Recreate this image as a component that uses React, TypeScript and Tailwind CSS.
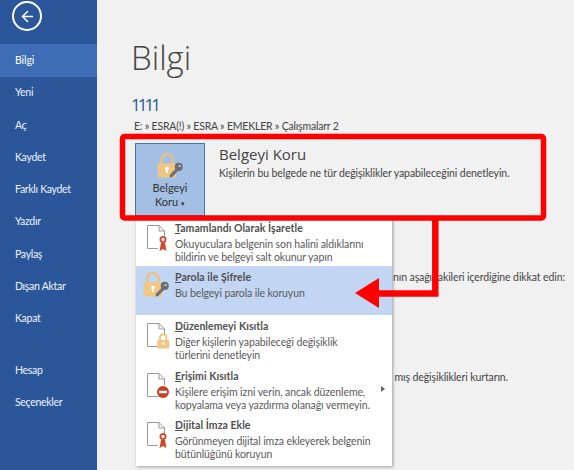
import { ArrowLeft } from "lucide-react";

const font = { fontFamily: 'Lato, "Open Sans", sans-serif' };
const headFont = { fontFamily: '"Open Sans", "Noto Sans", sans-serif' };

const navTop = ["Yeni", "Aç", "Kaydet", "Farklı Kaydet", "Yazdır", "Paylaş", "Dışarı Aktar", "Kapat"];
const navBottom = ["Hesap", "Seçenekler"];

function LockKey({ className }: { className?: string }) {
  return (
    <svg viewBox="0 0 32 32" className={className}>
      <path d="M6 13V9a6.5 6.5 0 0 1 13 0v4" fill="none" stroke="#eec07c" strokeWidth="2.6" />
      <rect x="2" y="13" width="21" height="16" rx="1" fill="#efc684" />
      <circle cx="12.5" cy="19" r="2.2" fill="#fff" />
      <rect x="11.5" y="19" width="2" height="5" fill="#fff" />
      <g fill="#6d6e71">
        <circle cx="26" cy="17" r="4.6" />
        <path d="M23.4 18.4l2.4 2.4-7 7.6-1.4.6-1.6-.2-.2-1.8.6-1.4z" />
      </g>
      <circle cx="27" cy="16" r="1.2" fill="#d9d9d9" />
    </svg>
  );
}

function DocIcon({ badge }: { badge: "ribbon" | "lock" | "stop" }) {
  return (
    <svg viewBox="0 0 28 28" className="w-[28px] h-[28px]">
      <path d="M16 24.5H5.5V1.5H17L22.5 7V13M17 1.5V7H22.5" fill="none" stroke="#999" strokeWidth="1" />
      {badge === "ribbon" && (
        <g>
          <circle cx="21" cy="15.5" r="2.6" fill="none" stroke="#d24726" strokeWidth="1.8" />
          <path d="M17.5 27l1.5-8h4l1.5 8-3.5-2z" fill="#d24726" />
        </g>
      )}
      {badge === "lock" && (
        <g>
          <path d="M18 18v-2.5a3.2 3.2 0 0 1 6.4 0V18" fill="none" stroke="#eec07c" strokeWidth="1.7" />
          <rect x="15.2" y="18" width="12" height="8.5" rx="1" fill="#efc684" />
          <circle cx="21.2" cy="21.5" r="1.2" fill="#fff" />
        </g>
      )}
      {badge === "stop" && (
        <g>
          <circle cx="21" cy="20" r="6" fill="#c8402a" />
          <rect x="17" y="18.8" width="8" height="2.4" fill="#fff" />
        </g>
      )}
    </svg>
  );
}

function MenuItem({
  title,
  hot,
  lines,
  icon,
  active,
  arrow,
  height,
}: {
  title: string;
  hot: string;
  lines: string[];
  icon: React.ReactNode;
  active?: boolean;
  arrow?: boolean;
  height: string;
}) {
  return (
    <div className={`flex relative pl-[6px] ${height} ${active ? "bg-[#c2d5f2]" : ""}`}>
      <div className="w-[32px] shrink-0 pt-[3px]">{icon}</div>
      <div className="pl-[1px]">
        <div className="text-[10.5px] leading-[14px] font-bold tracking-[0.05px] text-[#505050] whitespace-nowrap">
          <span className="underline">{hot}</span>
          {title}
        </div>
        <div className="mt-[3px]">
          {lines.map((l) => (
            <div key={l} className="text-[10.5px] leading-[13px] tracking-[-0.1px] text-[#5a5a5a] whitespace-nowrap">
              {l}
            </div>
          ))}
        </div>
      </div>
      {arrow && (
        <span className="absolute right-[7px] top-[21px] w-0 h-0 border-y-[3px] border-y-transparent border-l-[4px] border-l-[#666]" />
      )}
    </div>
  );
}

export default function App() {
  return (
    <div className="relative flex w-[574px] h-[470px] overflow-hidden bg-[#f1f1f1]" style={font}>
      <aside className="w-[97px] shrink-0 bg-[#2b579a] text-white">
        <div className="h-[44px] pl-[12px] pt-[1px]">
          <div className="w-[30px] h-[30px] rounded-full border-2 border-white flex items-center justify-center">
            <ArrowLeft className="w-[17px] h-[17px]" strokeWidth={2.2} />
          </div>
        </div>
        <div className="h-[33px] bg-[#3e6db5] pl-[15px] pt-[1px] flex items-center text-[10.5px] tracking-[-0.1px]">Bilgi</div>
        {navTop.map((n) => (
          <div key={n} className="h-[32.3px] pl-[15px] flex items-center text-[10.5px] tracking-[-0.3px] text-[#eef2f9]">
            {n}
          </div>
        ))}
        <div className="h-[19px]" />
        {navBottom.map((n) => (
          <div key={n} className="h-[32.3px] pl-[15px] flex items-center text-[10.5px] tracking-[-0.3px] text-[#eef2f9]">
            {n}
          </div>
        ))}
      </aside>

      <main className="flex-1 pl-[35px] pt-[36px] text-[#444]">
        <h1 className="text-[33px] leading-[44px] font-light text-[#444] -ml-[1px]" style={headFont}>
          Bilgi
        </h1>
        <div className="mt-[15px] -ml-[1px] text-[17px] leading-[20px] tracking-[-3px] text-[#2b579a]" style={headFont}>
          1111
        </div>
        <div className="mt-[4px] ml-[2px] text-[10.5px] leading-[14px] tracking-[-0.2px] text-[#444] whitespace-nowrap">
          E: » ESRA(!) » ESRA » EMEKLER » Çalışmalarr 2
        </div>
        <div className="mt-[10px] ml-[3px] flex">
          <div className="w-[70px] h-[73px] bg-[#a4bfe4] border border-[#3f74b8] flex flex-col items-center pt-[8px] shrink-0">
            <LockKey className="w-[28px] h-[28px]" />
            <div className="mt-[1px] text-[11px] leading-[14px] text-center text-[#333]">
              Belgeyi
              <br />
              Koru <span className="text-[7px] align-middle">▾</span>
            </div>
          </div>
          <div className="pl-[14px] pt-[1px]">
            <div className="text-[15px] leading-[20px] text-[#444] whitespace-nowrap" style={headFont}>
              Belgeyi Koru
            </div>
            <div className="mt-[2px] text-[10.5px] leading-[14px] tracking-[-0.1px] text-[#444] whitespace-nowrap">
              Kişilerin bu belgede ne tür değişiklikler yapabileceğini denetleyin.
            </div>
          </div>
        </div>
        <div className="mt-[54px] w-[433px] text-right text-[10.5px] leading-[14px] tracking-[-0.1px] whitespace-nowrap">
          nın aşağıdakileri içerdiğine dikkat edin:
        </div>
        <div className="mt-[86px] w-[376px] text-right text-[10.5px] leading-[14px] tracking-[-0.1px] whitespace-nowrap">
          mış değişiklikleri kurtarın.
        </div>
      </main>

      {/* dropdown */}
      <div className="absolute left-[136px] top-[218px] w-[256px] h-[248px] bg-white shadow-[1px_1px_3px_rgba(0,0,0,0.35)]">
        <MenuItem
          title="amamlandı Olarak İşaretle"
          hot="T"
          lines={["Okuyuculara belgenin son halini aldıklarını", "bildirin ve belgeyi salt okunur yapın"]}
          icon={<DocIcon badge="ribbon" />}
          height="h-[48px] pt-[3px]"
        />
        <MenuItem
          active
          title="arola ile Şifrele"
          hot="P"
          lines={["Bu belgeyi parola ile koruyun"]}
          icon={<LockKey className="w-[28px] h-[28px] -mt-[2px]" />}
          height="h-[49px] pt-[4px]"
        />
        <MenuItem
          title="üzenlemeyi Kısıtla"
          hot="D"
          lines={["Diğer kişilerin yapabileceği değişiklik", "türlerini denetleyin"]}
          icon={<DocIcon badge="lock" />}
          height="h-[50px] pt-[4px]"
        />
        <MenuItem
          arrow
          title="rişimi Kısıtla"
          hot="E"
          lines={["Kişilere erişim izni verin, ancak düzenleme,", "kopyalama veya yazdırma olanağı vermeyin."]}
          icon={<DocIcon badge="stop" />}
          height="h-[49px] pt-[4px]"
        />
        <MenuItem
          title="ijital İmza Ekle"
          hot="D"
          lines={["Görünmeyen dijital imza ekleyerek belgenin", "bütünlüğünü koruyun"]}
          icon={<DocIcon badge="ribbon" />}
          height="h-[52px] pt-[4px]"
        />
      </div>

      {/* red annotation */}
      <svg className="absolute left-0 top-0 pointer-events-none" width="574" height="470">
        <rect x="122.5" y="136.5" width="421" height="81.5" rx="2" fill="none" stroke="#fe0000" strokeWidth="5.5" />
        <path d="M435.3 218V293.5H375" fill="none" stroke="#fe0000" strokeWidth="6.5" />
        <path d="M355 293L379 278V308Z" fill="#fe0000" />
      </svg>
    </div>
  );
}
